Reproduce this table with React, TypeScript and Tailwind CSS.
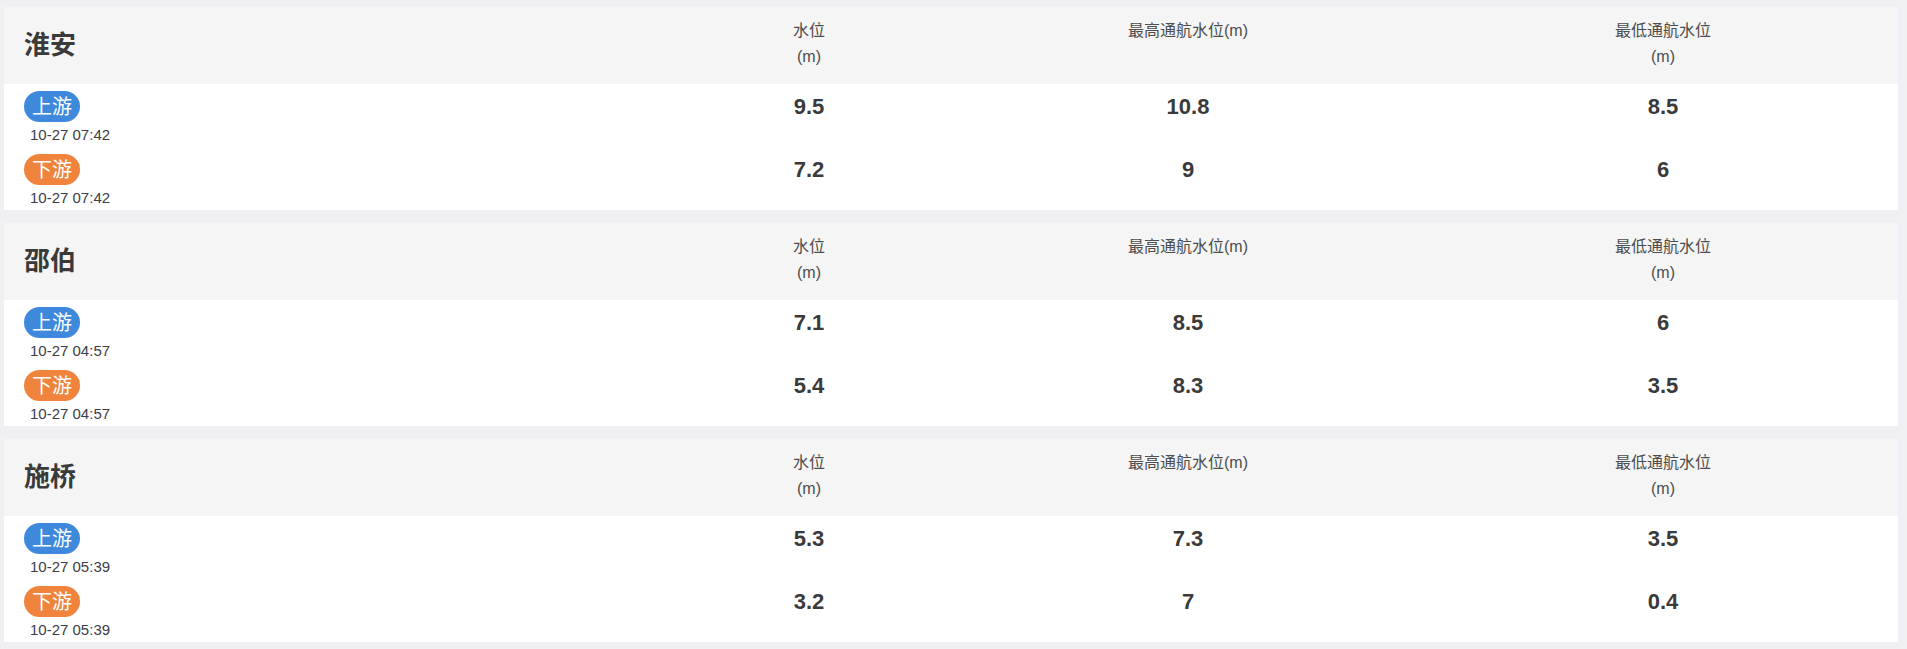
import React from "react";

type Row = { label: string; kind: "up" | "down"; time: string; level: string; max: string; min: string };
type Station = { name: string; rows: Row[] };

const stations: Station[] = [
  {
    name: "淮安",
    rows: [
      { label: "上游", kind: "up", time: "10-27 07:42", level: "9.5", max: "10.8", min: "8.5" },
      { label: "下游", kind: "down", time: "10-27 07:42", level: "7.2", max: "9", min: "6" },
    ],
  },
  {
    name: "邵伯",
    rows: [
      { label: "上游", kind: "up", time: "10-27 04:57", level: "7.1", max: "8.5", min: "6" },
      { label: "下游", kind: "down", time: "10-27 04:57", level: "5.4", max: "8.3", min: "3.5" },
    ],
  },
  {
    name: "施桥",
    rows: [
      { label: "上游", kind: "up", time: "10-27 05:39", level: "5.3", max: "7.3", min: "3.5" },
      { label: "下游", kind: "down", time: "10-27 05:39", level: "3.2", max: "7", min: "0.4" },
    ],
  },
];

const grid = "grid grid-cols-[666px_278px_480px_470px]";

function Card({ s }: { s: Station }) {
  return (
    <div className="bg-white">
      <div className={`${grid} h-[77px] bg-[#f5f5f5]`}>
        <div className="flex items-center pl-5 text-[26px] font-bold text-[#3a3a3a]">{s.name}</div>
        <div className="pt-[11px] text-center text-[16px] leading-[26px] text-[#4d4d4d]">
          水位
          <br />
          (m)
        </div>
        <div className="pt-[11px] text-center text-[16px] leading-[26px] text-[#4d4d4d]">最高通航水位(m)</div>
        <div className="pt-[11px] text-center text-[16px] leading-[26px] text-[#4d4d4d]">
          最低通航水位
          <br />
          (m)
        </div>
      </div>
      <div className="h-[126px]">
        {s.rows.map((r, i) => (
          <div key={i} className={`${grid} h-[63px] pt-[7px]`}>
            <div className="pl-5">
              <span
                className={`inline-flex h-[31px] items-center rounded-full px-[8px] text-[20px] text-white ${
                  r.kind === "up" ? "bg-[#3e89dc]" : "bg-[#f0843c]"
                }`}
              >
                {r.label}
              </span>
              <div className="mt-[2px] pl-[6px] text-[15px] leading-[22px] text-[#3d3d46]">{r.time}</div>
            </div>
            <div className="flex h-[31px] items-center justify-center text-[22px] font-bold text-[#3a3a3a]">{r.level}</div>
            <div className="flex h-[31px] items-center justify-center text-[22px] font-bold text-[#3a3a3a]">{r.max}</div>
            <div className="flex h-[31px] items-center justify-center text-[22px] font-bold text-[#3a3a3a]">{r.min}</div>
          </div>
        ))}
      </div>
    </div>
  );
}

export default function App() {
  return (
    <div
      className="min-h-[649px] w-full bg-[#efeff4] pb-[7px] pl-[4px] pr-[9px] pt-[7px]"
      style={{ fontFamily: '"Liberation Sans", "Noto Sans CJK SC", sans-serif' }}
    >
      <div className="flex flex-col gap-[13px]">
        {stations.map((s) => (
          <Card key={s.name} s={s} />
        ))}
      </div>
    </div>
  );
}
